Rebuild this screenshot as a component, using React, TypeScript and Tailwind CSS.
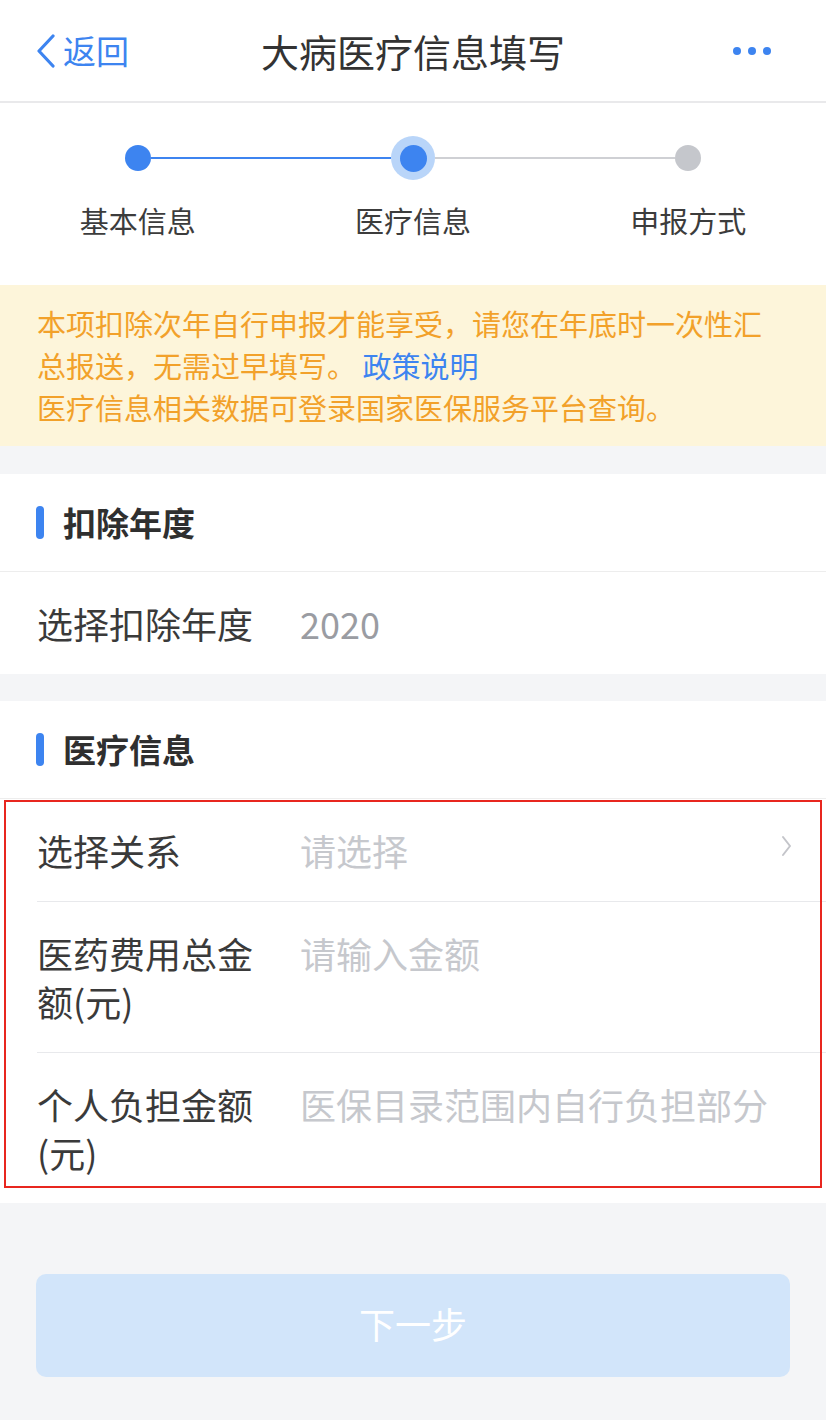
import React from "react";

const font = { fontFamily: '"Noto Sans CJK SC", "Noto Sans", sans-serif' };

function SectionHeader({ title }: { title: string }) {
  return (
    <div className="h-[98px] flex items-center pl-[36px] border-b border-[#ededed]">
      <span className="w-[8px] h-[33px] rounded-full bg-[#3d84f0]" />
      <span className="ml-[19px] text-[33px] font-bold text-[#2f2f2f] leading-none">{title}</span>
    </div>
  );
}

function Row({
  label,
  value,
  valueClass,
  chevron,
  divider,
}: {
  label: React.ReactNode;
  value: string;
  valueClass: string;
  chevron?: boolean;
  divider?: boolean;
}) {
  return (
    <div className="pl-[37px]">
      <div className={`flex items-start py-[27px] pr-[34px] ${divider ? "border-b border-[#e8e9ec]" : ""}`}>
        <div className="w-[226px] shrink-0 text-[36px] leading-[48px] text-[#3a3a3a]">{label}</div>
        <div className={`ml-[37px] flex-1 text-[36px] leading-[48px] ${valueClass}`}>{value}</div>
        {chevron && (
          <svg width="12" height="24" viewBox="0 0 12 24" className="mt-[8px]">
            <path d="M3 3 L10 12 L3 21" fill="none" stroke="#c4c5ca" strokeWidth="2" strokeLinecap="round" strokeLinejoin="round" />
          </svg>
        )}
      </div>
    </div>
  );
}

export default function App() {
  return (
    <div className="min-h-[1420px] bg-[#f4f5f7]" style={font}>
      {/* Header */}
      <div className="h-[103px] bg-white border-b-2 border-[#e9e9eb] grid grid-cols-[1fr_auto_1fr] items-center px-[35px]">
        <div className="flex items-center text-[#3d84f0]">
          <svg width="22" height="34" viewBox="0 0 22 34">
            <path d="M18 2 L4 17 L18 32" fill="none" stroke="#3d84f0" strokeWidth="3.2" strokeLinecap="round" strokeLinejoin="round" />
          </svg>
          <span className="ml-[6px] text-[33px] leading-none">返回</span>
        </div>
        <div className="text-[38px] text-[#333] leading-none">大病医疗信息填写</div>
        <div className="flex justify-end gap-[7px] pr-[20px]">
          <span className="w-[8px] h-[8px] rounded-full bg-[#3d84f0]" />
          <span className="w-[8px] h-[8px] rounded-full bg-[#3d84f0]" />
          <span className="w-[8px] h-[8px] rounded-full bg-[#3d84f0]" />
        </div>
      </div>

      {/* Stepper */}
      <div className="bg-white pt-[33px] pb-[45px] grid grid-cols-3">
        <div className="flex flex-col items-center">
          <div className="w-full h-[44px] flex items-center">
            <div className="flex-1" />
            <span className="w-[26px] h-[26px] rounded-full bg-[#3d84f0]" />
            <div className="flex-1 h-[2px] bg-[#3d84f0]" />
          </div>
          <div className="mt-[20px] text-[29px] leading-[40px] text-[#3c3c3c]">基本信息</div>
        </div>
        <div className="flex flex-col items-center">
          <div className="w-full h-[44px] flex items-center">
            <div className="flex-1 h-[2px] bg-[#3d84f0]" />
            <span className="w-[44px] h-[44px] rounded-full bg-[#b9d5f9] flex items-center justify-center">
              <span className="w-[27px] h-[27px] rounded-full bg-[#3d84f0]" />
            </span>
            <div className="flex-1 h-[2px] bg-[#cfd0d4]" />
          </div>
          <div className="mt-[20px] text-[29px] leading-[40px] text-[#3c3c3c]">医疗信息</div>
        </div>
        <div className="flex flex-col items-center">
          <div className="w-full h-[44px] flex items-center">
            <div className="flex-1 h-[2px] bg-[#cfd0d4]" />
            <span className="w-[26px] h-[26px] rounded-full bg-[#c5c7cc]" />
            <div className="flex-1" />
          </div>
          <div className="mt-[20px] text-[29px] leading-[40px] text-[#3c3c3c]">申报方式</div>
        </div>
      </div>

      {/* Notice */}
      <div className="bg-[#fdf5da] px-[37px] pt-[17px] pb-[18px] text-[29px] leading-[42px] text-[#f2a12a] whitespace-nowrap">
        <p>
          本项扣除次年自行申报才能享受，请您在年底时一次性汇
          <br />
          总报送，无需过早填写。 <span className="text-[#3d84f0]">政策说明</span>
        </p>
        <p>医疗信息相关数据可登录国家医保服务平台查询。</p>
      </div>

      {/* Section 1 */}
      <div className="mt-[28px] bg-white">
        <SectionHeader title="扣除年度" />
        <Row label="选择扣除年度" value="2020" valueClass="text-[#9a9ca2]" />
      </div>

      {/* Section 2 */}
      <div className="mt-[27px] bg-white">
        <SectionHeader title="医疗信息" />
        <div className="relative">
          <Row label="选择关系" value="请选择" valueClass="text-[#c6c8cd]" chevron divider />
          <Row label={<>医药费用总金<br />额(元)</>} value="请输入金额" valueClass="text-[#c6c8cd]" divider />
          <Row label={<>个人负担金额<br />(元)</>} value="医保目录范围内自行负担部分" valueClass="text-[#c6c8cd] whitespace-nowrap" />
          <div className="absolute left-[4px] right-[4px] top-[1px] bottom-[15px] border-2 border-[#e8261f] pointer-events-none" />
        </div>
      </div>

      {/* Button */}
      <div className="px-[36px] pt-[71px] pb-[44px]">
        <div className="h-[103px] rounded-[10px] bg-[#d2e5fa] flex items-center justify-center pb-[6px] text-[36px] leading-none text-white">
          下一步
        </div>
      </div>
    </div>
  );
}
